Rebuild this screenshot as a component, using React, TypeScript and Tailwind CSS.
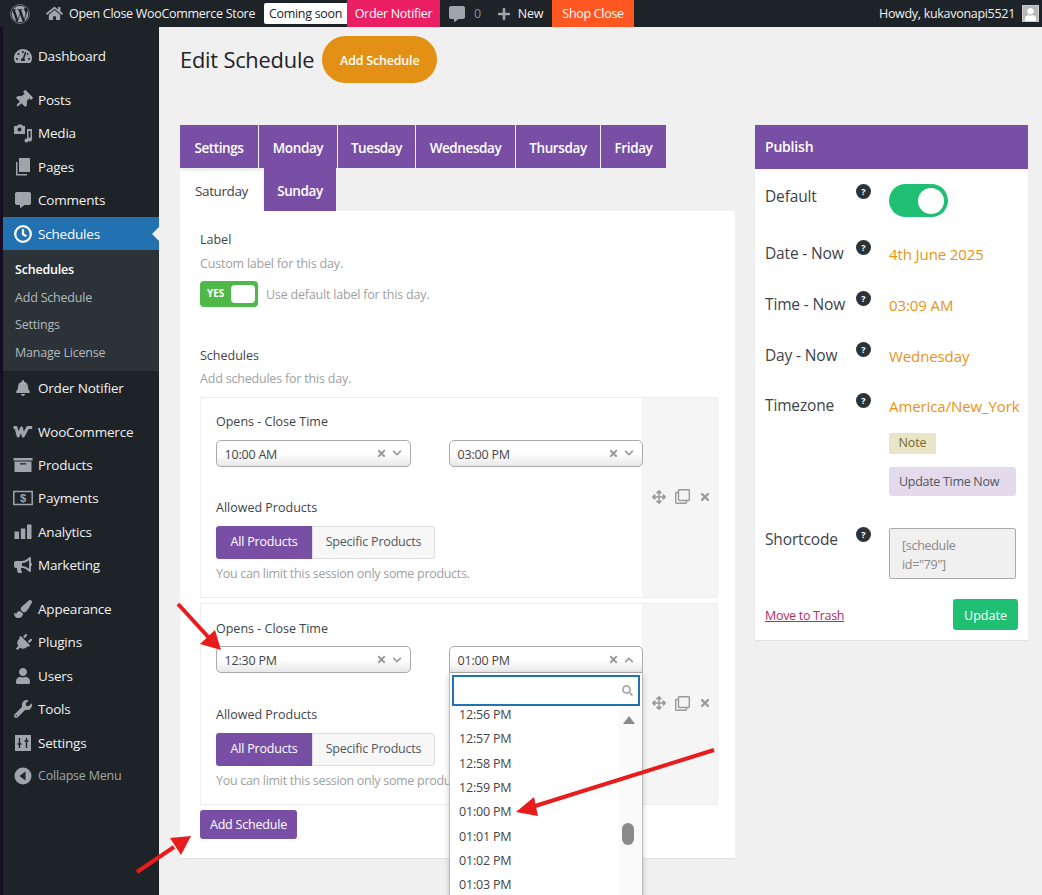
import type { ReactNode } from "react";
import {
  FaArrowsAlt,
  FaBell,
  FaBullhorn,
  FaChevronDown,
  FaChevronUp,
  FaCommentAlt,
  FaHome,
  FaPaintBrush,
  FaPlug,
  FaPlus,
  FaRegClone,
  FaSearch,
  FaTachometerAlt,
  FaThumbtack,
  FaTimes,
  FaUser,
  FaWordpress,
  FaWrench,
} from "react-icons/fa";

const iconClass = "h-[18px] w-[18px]";

function MediaIcon() {
  return (
    <svg viewBox="0 0 20 20" className="h-5 w-5" fill="currentColor">
      <path d="M1 3h3l1-1.500h4l1 1.500h2v8H1z" />
      <circle cx="6.500" cy="6.500" r="2" fill="#1d2327" />
      <path d="M14 6h5v10.500a2 2 0 1 1-1.500-1.900V8h-2v9.500a2 2 0 1 1-1.500-1.900z" />
    </svg>
  );
}

function PagesIcon() {
  return (
    <svg viewBox="0 0 20 20" className="h-5 w-5" fill="currentColor">
      <path d="M6 1h11v14H6z" />
      <path d="M3 5h1.500v12H14v1.500H3z" />
    </svg>
  );
}

function ClockIcon() {
  return (
    <svg viewBox="0 0 20 20" className="h-5 w-5" fill="none" stroke="currentColor" strokeWidth="2.200">
      <circle cx="10" cy="10" r="7.800" />
      <path d="M10 5v5.300l3.400 2" />
    </svg>
  );
}

function WooIcon() {
  return (
    <svg viewBox="0 0 20 20" className="h-5 w-5" fill="none" stroke="currentColor" strokeWidth="3" strokeLinejoin="round">
      <path d="M0.500 5.500h2.500l2.200 8.500 3.300-8 1.700 8 4.500-8.500h4.500" />
    </svg>
  );
}

function ProductsIcon() {
  return (
    <svg viewBox="0 0 20 20" className="h-5 w-5" fill="currentColor">
      <path d="M0.500 3h19v2.500H0.500z" />
      <path d="M1.500 6.500h17V17h-17zM7 8.200v1.300h6V8.200z" fillRule="evenodd" />
    </svg>
  );
}

function PaymentsIcon() {
  return (
    <svg viewBox="0 0 20 20" className="h-5 w-5">
      <rect x="0.800" y="3.500" width="18.400" height="13" fill="none" stroke="currentColor" strokeWidth="1.500" />
      <text x="10" y="14.300" textAnchor="middle" fontSize="11" fontWeight="700" fontFamily="'Liberation Sans', sans-serif" fill="currentColor">
        $
      </text>
    </svg>
  );
}

function AnalyticsIcon() {
  return (
    <svg viewBox="0 0 20 20" className="h-5 w-5" fill="currentColor">
      <path d="M1.500 9.500h4.500V17H1.500zM7.800 6.500h4.500V17H7.800zM14 2.500h4.500V17H14z" />
    </svg>
  );
}

function SettingsIcon() {
  return (
    <svg viewBox="0 0 20 20" className="h-5 w-5">
      <path d="M2 2h16v16H2z" fill="currentColor" />
      <path d="M6.500 5v10M13.500 5v10M4.500 11h4M11.500 8h4" stroke="#1d2327" strokeWidth="1.400" />
    </svg>
  );
}

function CollapseIcon() {
  return (
    <svg viewBox="0 0 20 20" className="h-5 w-5">
      <circle cx="10" cy="10" r="8.500" fill="currentColor" />
      <path d="M12.500 5.500v9L6.500 10z" fill="#1d2327" />
    </svg>
  );
}

function MenuRow({ icon, label, labelClass = "text-[13.5px] text-[#f0f0f1]" }: { icon: ReactNode; label: string; labelClass?: string }) {
  return (
    <div className="flex h-[33.4px] items-center">
      <span className="flex w-[35px] shrink-0 justify-center pl-[4px] text-[#a0a5aa]">{icon}</span>
      <span className={`tracking-[-0.2px] ${labelClass}`}>{label}</span>
    </div>
  );
}

const groupOne = [
  { label: "Posts", icon: <FaThumbtack className={`${iconClass} rotate-45`} /> },
  { label: "Media", icon: <MediaIcon /> },
  { label: "Pages", icon: <PagesIcon /> },
  { label: "Comments", icon: <FaCommentAlt className="h-4 w-4" /> },
];

const groupTwo = [
  { label: "WooCommerce", icon: <WooIcon /> },
  { label: "Products", icon: <ProductsIcon /> },
  { label: "Payments", icon: <PaymentsIcon /> },
  { label: "Analytics", icon: <AnalyticsIcon /> },
  { label: "Marketing", icon: <FaBullhorn className={iconClass} /> },
];

const groupThree = [
  { label: "Appearance", icon: <FaPaintBrush className={iconClass} /> },
  { label: "Plugins", icon: <FaPlug className={`${iconClass} rotate-45`} /> },
  { label: "Users", icon: <FaUser className="h-4 w-4" /> },
  { label: "Tools", icon: <FaWrench className={iconClass} /> },
  { label: "Settings", icon: <SettingsIcon /> },
];

function Sidebar() {
  return (
    <aside className="w-[156px] shrink-0 bg-[#1d2327] pt-[12.500px]">
      <MenuRow icon={<FaTachometerAlt className={iconClass} />} label="Dashboard" />
      <div className="mt-[10.500px]">
        {groupOne.map((item) => (
          <MenuRow key={item.label} icon={item.icon} label={item.label} />
        ))}
      </div>
      <div className="relative bg-[#2271b1]">
        <MenuRow icon={<span className="text-white"><ClockIcon /></span>} label="Schedules" labelClass="text-[13.5px] text-white" />
        <span className="absolute right-0 top-[10px] h-0 w-0 border-y-[7px] border-r-[7px] border-y-transparent border-r-[#f0f0f1]" />
      </div>
      <div className="bg-[#2c3338] pb-[4px] pt-[6px] text-[12.500px] tracking-[-0.2px] text-[#b4b9be]">
        <div className="flex h-[27.700px] items-center pl-[12px] font-semibold text-white">Schedules</div>
        <div className="flex h-[27.700px] items-center pl-[12px]">Add Schedule</div>
        <div className="flex h-[27.700px] items-center pl-[12px]">Settings</div>
        <div className="flex h-[27.700px] items-center pl-[12px]">Manage License</div>
      </div>
      <MenuRow icon={<FaBell className="h-4 w-4" />} label="Order Notifier" />
      <div className="mt-[10.500px]">
        {groupTwo.map((item) => (
          <MenuRow key={item.label} icon={item.icon} label={item.label} />
        ))}
      </div>
      <div className="mt-[10.500px]">
        {groupThree.map((item) => (
          <MenuRow key={item.label} icon={item.icon} label={item.label} />
        ))}
      </div>
      <MenuRow icon={<CollapseIcon />} label="Collapse Menu" labelClass="text-[12.5px] text-[#a0a5aa]" />
    </aside>
  );
}

function TopBar() {
  return (
    <header className="flex h-[27px] shrink-0 items-center bg-[#1d2327] text-[12.5px] tracking-[-0.3px] text-[#f0f0f1]">
      <FaWordpress className="ml-[10px] h-[20px] w-[20px] text-[#a0a5aa]" />
      <FaHome className="ml-[16px] h-[17px] w-[17px] text-[#a0a5aa]" />
      <span className="ml-[6px] w-[195px] whitespace-nowrap pt-[2px]">Open Close WooCommerce Store</span>
      <span className="flex h-[21px] w-[83px] items-center justify-center rounded-l-[2px] bg-white pt-[2px] text-[#1d2327]">Coming soon</span>
      <span className="flex h-full w-[93px] items-center justify-center bg-[#e91e63] pt-[2px] text-white">Order Notifier</span>
      <FaCommentAlt className="ml-[9px] h-[16px] w-[16px] text-[#a0a5aa]" />
      <span className="ml-[9px] pt-[2px] text-[#8c8f94]">0</span>
      <FaPlus className="ml-[16px] h-[14px] w-[14px] text-[#a0a5aa]" />
      <span className="ml-[7px] pt-[2px]">New</span>
      <span className="ml-[9px] flex h-full w-[82px] items-center justify-center bg-[#ff5722] pt-[2px] text-white">Shop Close</span>
      <span className="ml-auto pt-[2px]">Howdy, kukavonapi5521</span>
      <span className="mx-[3px] ml-[7px] flex h-[17px] w-[17px] items-end justify-center overflow-hidden border border-[#c9c9c9] bg-[#b9b9b9]">
        <FaUser className="h-[13px] w-[13px] text-white" />
      </span>
    </header>
  );
}

const rowOneTabs = [
  { label: "Settings", width: "w-[78px]" },
  { label: "Monday", width: "w-[78px]" },
  { label: "Tuesday", width: "w-[77px]" },
  { label: "Wednesday", width: "w-[99px]" },
  { label: "Thursday", width: "w-[84px]" },
  { label: "Friday", width: "w-[65px]" },
];

function Tabs() {
  return (
    <div className="text-[13.500px] font-semibold tracking-[-0.4px]">
      <div className="flex gap-px">
        {rowOneTabs.map((tab) => (
          <span key={tab.label} className={`flex h-[43px] items-center justify-center bg-[#794fa6] pt-[3px] text-white ${tab.width}`}>
            {tab.label}
          </span>
        ))}
      </div>
      <div className="flex h-[43px] gap-px">
        <span className="mt-[3px] flex w-[83px] items-center justify-center bg-white font-medium text-[#3c434a]">Saturday</span>
        <span className="flex w-[72px] items-center justify-center bg-[#794fa6] pt-[3px] text-white">Sunday</span>
      </div>
    </div>
  );
}

function TimeSelect({ value, open, width, children }: { value: string; open?: boolean; width: string; children?: ReactNode }) {
  return (
    <div className={`relative z-10 shrink-0 ${width}`}>
      <div className={`flex h-[27px] items-center rounded-[5px] border border-[#aaa] bg-gradient-to-b from-white via-white to-[#e8e8e8] pl-[7.500px] pr-[8px] text-[12.500px] tracking-[-0.2px] text-[#444] ${open ? "rounded-b-none" : ""}`}>
        <span className="pt-[4px]">{value}</span>
        <FaTimes className="ml-auto h-[11px] w-[11px] text-[#999]" />
        {open ? (
          <FaChevronUp className="ml-[5px] h-[10px] w-[10px] text-[#999]" />
        ) : (
          <FaChevronDown className="ml-[5px] h-[10px] w-[10px] text-[#999]" />
        )}
      </div>
      {children}
    </div>
  );
}

const dropdownTimes = ["12:56 PM", "12:57 PM", "12:58 PM", "12:59 PM", "01:00 PM", "01:01 PM", "01:02 PM", "01:03 PM"];

function TimeDropdown() {
  return (
    <div className="absolute left-0 top-[27px] z-10 h-[230px] w-full overflow-hidden border-x border-[#bbb] bg-white shadow-[0_2px_6px_rgba(0,0,0,0.2)]">
      <div className="relative z-10 bg-white px-[2px] pt-[2px]">
        <div className="flex h-[31px] items-center justify-end border-2 border-[#2271b1] pr-[5px]">
          <FaSearch className="h-[11px] w-[11px] text-[#aaa]" />
        </div>
      </div>
      <div className="flex">
        <div className="-mt-[3px] flex-1 pl-[9px] text-[12.500px] tracking-[-0.2px] text-[#444]">
          {dropdownTimes.map((time) => (
            <div key={time} className="flex h-[24.300px] items-center">
              {time}
            </div>
          ))}
        </div>
        <div className="relative h-[200px] w-[23px] bg-[#fafafa]">
          <span className="absolute left-[4px] top-[10px] h-0 w-0 border-x-[6px] border-b-[8px] border-x-transparent border-b-[#8a8a8a]" />
          <span className="absolute left-[3px] top-[117px] h-[22px] w-[12px] rounded-[6px] bg-[#8a8a8a]" />
        </div>
      </div>
    </div>
  );
}

function ScheduleBox({ start, end, open }: { start: string; end: string; open?: boolean }) {
  return (
    <div className={`flex border border-[#eeeeee] bg-white ${open ? "h-[202px]" : "h-[201px]"}`}>
      <div className={`w-[441px] shrink-0 pl-[15px] ${open ? "pt-[15.500px]" : "pt-[15px]"}`}>
        <div className="text-[12.500px] font-medium text-[#3c434a]">Opens - Close Time</div>
        <div className="mt-[8px] flex gap-[38px]">
          <TimeSelect value={start} width="w-[195px]" />
          <TimeSelect value={end} open={open} width="w-[194px]">
            {open && <TimeDropdown />}
          </TimeSelect>
        </div>
        <div className={`text-[12.500px] font-medium text-[#3c434a] ${open ? "mt-[32.500px]" : "mt-[32px]"}`}>Allowed Products</div>
        <div className="mt-[8.500px] flex h-[33px] w-[219px] text-[12.500px] tracking-[-0.2px]">
          <span className="flex w-[96px] items-center justify-center rounded-l-[3px] bg-[#794fa6] text-white">All Products</span>
          <span className="flex flex-1 items-center justify-center rounded-r-[3px] border border-[#ddd] bg-[#f7f7f7] text-[#50575e]">Specific Products</span>
        </div>
        <div className="mt-[6px] text-[12.500px] tracking-[-0.3px] text-[#a0a0a0]">You can limit this session only some products.</div>
      </div>
      <div className="flex flex-1 items-center justify-center gap-[9px] bg-[#f5f5f5] pb-[2px] pl-[4px] text-[#9a9a9a]">
        <FaArrowsAlt className="h-[14px] w-[14px]" />
        <FaRegClone className="h-[15px] w-[15px]" />
        <FaTimes className="h-[12px] w-[12px]" />
      </div>
    </div>
  );
}

function SchedulePanel() {
  return (
    <section className="w-[555px] shrink-0">
      <Tabs />
      <div className="h-[647px] bg-white pl-[20px] pr-[17px] pt-[20px] shadow-[0_1px_1px_rgba(0,0,0,0.05)]">
        <div className="text-[12.500px] font-medium text-[#3c434a]">Label</div>
        <div className="mt-[5px] text-[12.500px] tracking-[-0.2px] text-[#a0a0a0]">Custom label for this day.</div>
        <div className="mt-[7px] flex items-center">
          <span className="flex h-[26px] w-[58px] items-center rounded-[4px] bg-[#4eb848] pl-[7px] pr-[3px]">
            <span className="text-[10px] font-bold text-white">YES</span>
            <span className="ml-auto h-[18px] w-[24px] rounded-[4px] bg-white" />
          </span>
          <span className="ml-[8px] pt-[4px] text-[12.500px] tracking-[-0.2px] text-[#a0a0a0]">Use default label for this day.</span>
        </div>
        <div className="mt-[40px] text-[12.500px] font-medium text-[#3c434a]">Schedules</div>
        <div className="mt-[5px] text-[12.500px] tracking-[-0.2px] text-[#a0a0a0]">Add schedules for this day.</div>
        <div className="mt-[8px] flex flex-col gap-[5px]">
          <ScheduleBox start="10:00 AM" end="03:00 PM" />
          <ScheduleBox start="12:30 PM" end="01:00 PM" open />
        </div>
        <button className="mt-[5px] flex h-[29px] w-[97px] items-center justify-center rounded-[3px] bg-[#794fa6] pt-[2px] text-[12.500px] tracking-[-0.2px] text-white">
          Add Schedule
        </button>
      </div>
    </section>
  );
}

function HelpDot() {
  return (
    <span className="flex h-[15px] w-[15px] items-center justify-center rounded-full bg-[#2c3338] text-[9px] font-bold leading-none text-white">
      ?
    </span>
  );
}

function PublishRow({
  label,
  height,
  helpClass = "-mt-[2.5px]",
  valueClass = "pt-[1px]",
  children,
}: {
  label: string;
  height: string;
  helpClass?: string;
  valueClass?: string;
  children: ReactNode;
}) {
  return (
    <div className={`flex ${height}`}>
      <span className="w-[101px] shrink-0 whitespace-nowrap pl-[10px] text-[15.500px] font-medium leading-[23px] tracking-[-0.15px] text-[#3c434a]">{label}</span>
      <span className={`w-[33px] shrink-0 ${helpClass}`}>
        <HelpDot />
      </span>
      <div className={`min-w-0 flex-1 text-[15px] tracking-[-0.1px] text-[#ea9314] ${valueClass}`}>{children}</div>
    </div>
  );
}

function PublishPanel() {
  return (
    <section className="ml-[20px] h-[515px] w-[273px] shrink-0 bg-white shadow-[0_1px_1px_rgba(0,0,0,0.05)]">
      <div className="flex h-[44px] items-center bg-[#794fa6] pb-[2px] pl-[10px] text-[14px] font-semibold tracking-[-0.2px] text-white">Publish</div>
      <div className="pt-[16px]">
        <PublishRow label="Default" height="h-[57px]" helpClass="-mt-px" valueClass="-mt-px">
          <span className="flex h-[33px] w-[59px] items-center justify-end rounded-full bg-[#1fc074] pr-[4px]">
            <span className="h-[26px] w-[26px] rounded-full bg-white" />
          </span>
        </PublishRow>
        <PublishRow label="Date - Now" height="h-[51px]">
          4th June 2025
        </PublishRow>
        <PublishRow label="Time - Now" height="h-[51px]">
          03:09 AM
        </PublishRow>
        <PublishRow label="Day - Now" height="h-[50px]">
          Wednesday
        </PublishRow>
        <PublishRow label="Timezone" height="h-[134px]" helpClass="-mt-px">
          <div className="whitespace-nowrap">America/New_York</div>
          <div className="mt-[15px] flex h-[21px] w-[47px] items-center justify-center rounded-[2px] bg-[#e8e5c8] pt-px text-[12.500px] text-[#7a6a1f]">Note</div>
          <div className="mt-[13px] flex h-[29px] w-[127px] items-center rounded-[3px] bg-[#e3daec] pl-[10px] pt-[3px] text-[12.500px] tracking-[-0.3px] text-[#50575e]">Update Time Now</div>
        </PublishRow>
        <PublishRow label="Shortcode" height="h-[71px]" helpClass="-mt-px" valueClass="pt-0">
          <div className="h-[51px] w-[127px] rounded-[2px] border border-[#aaa] bg-[#f0f0f0] py-[7px] pl-[12px] pr-[20px] text-[12.500px] leading-[19px] tracking-[-0.3px] text-[#888]">
            [schedule id="79"]
          </div>
        </PublishRow>
        <div className="flex items-center justify-between pl-[10px] pr-[10px]">
          <span className="pt-[3px] text-[12.500px] tracking-[-0.3px] text-[#b32d5e] underline">Move to Trash</span>
          <span className="flex h-[31px] w-[65px] items-center justify-center rounded-[3px] bg-[#1fc074] pt-[3px] text-[12.500px] text-white">Update</span>
        </div>
      </div>
    </section>
  );
}

function Arrows() {
  return (
    <svg className="pointer-events-none absolute inset-0 z-20 h-[895px] w-[1042px]" viewBox="0 0 1042 895">
      <g stroke="#e81c1c" strokeWidth="4" fill="#e81c1c">
        <path d="M178 604L211 640" />
        <path d="M714 750L535 806" />
        <path d="M137 872L174 847" />
      </g>
      <g fill="#e81c1c">
        <path d="M221 650L200 644L215 630z" />
        <path d="M516 812L534 797L538 816z" />
        <path d="M191 836L170 838L181 855z" />
      </g>
    </svg>
  );
}

export default function App() {
  return (
    <div className="relative flex h-[895px] w-[1042px] flex-col overflow-hidden bg-[#f0f0f1] font-['Open_Sans',sans-serif]">
      <TopBar />
      <div className="flex flex-1">
        <div className="w-[3px] shrink-0 bg-[#160c24]" />
        <Sidebar />
        <main className="flex-1 pl-[21px]">
          <div className="flex items-start pt-[9px]">
            <h1 className="mt-[9px] text-[21.800px] leading-[30px] tracking-[-0.2px] text-[#1d2327]">Edit Schedule</h1>
            <span className="ml-[8px] flex h-[47px] w-[115px] items-center justify-center rounded-full bg-[#e29115] pt-[3px] text-[12.500px] font-semibold tracking-[-0.2px] text-white">
              Add Schedule
            </span>
          </div>
          <div className="mt-[42px] flex items-start">
            <SchedulePanel />
            <PublishPanel />
          </div>
        </main>
      </div>
      <Arrows />
    </div>
  );
}
